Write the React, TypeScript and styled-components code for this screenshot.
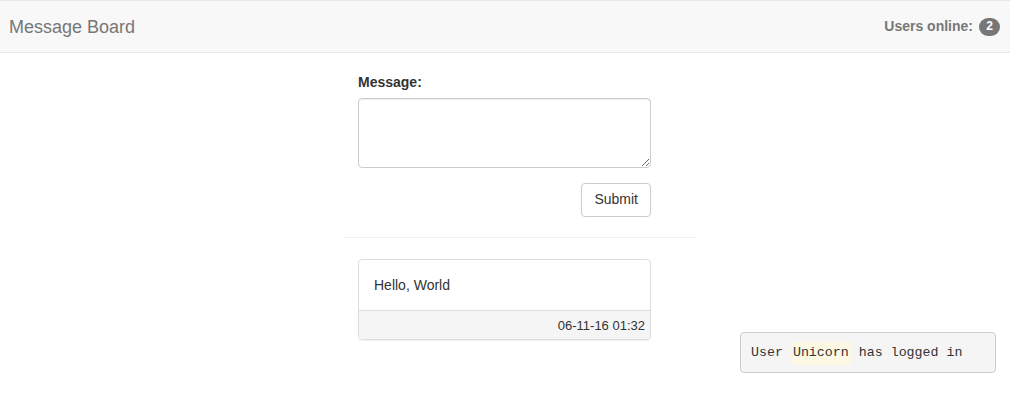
import styled, { createGlobalStyle } from 'styled-components';

const GlobalStyle = createGlobalStyle`
  * { box-sizing: border-box; }
  body {
    margin: 0;
    font-family: "Liberation Sans", Arial, sans-serif;
    font-size: 14px;
    line-height: 1.42857;
    color: #333;
    background: #fff;
  }
`;

const Page = styled.div`
  position: relative;
  width: 1010px;
  height: 402px;
  overflow: hidden;
`;

const Navbar = styled.nav`
  display: flex;
  align-items: center;
  justify-content: space-between;
  height: 53px;
  padding: 0 10px 0 9px;
  background: #f8f8f8;
  border-top: 1px solid #e7e7e7;
  border-bottom: 1px solid #e7e7e7;
`;

const Brand = styled.span`
  font-size: 18px;
  line-height: 20px;
  color: #777;
`;

const NavText = styled.span`
  display: flex;
  align-items: center;
  gap: 6px;
  font-weight: bold;
  color: #777;
  padding-top: 1px;
`;

const Badge = styled.span`
  display: inline-flex;
  align-items: center;
  justify-content: center;
  min-width: 21px;
  height: 18px;
  padding: 0 6px;
  border-radius: 10px;
  background: #777;
  color: #fff;
  font-size: 12px;
  font-weight: bold;
`;

const Column = styled.main`
  width: 352px;
  margin-left: 344px;
  padding-top: 20px;
`;

const Form = styled.form`
  width: 293px;
  margin-left: 14px;
  display: flex;
  flex-direction: column;
`;

const Label = styled.label`
  font-weight: bold;
  margin-bottom: 5px;
`;

const TextArea = styled.textarea`
  height: 70px;
  width: 100%;
  border: 1px solid #ccc;
  border-radius: 4px;
  box-shadow: inset 0 1px 1px rgba(0, 0, 0, 0.075);
  font: inherit;
  padding: 6px 12px;
`;

const Submit = styled.button`
  align-self: flex-end;
  margin-top: 15px;
  height: 34px;
  padding: 0 12px;
  font: inherit;
  color: #333;
  background: #fff;
  border: 1px solid #ccc;
  border-radius: 4px;
`;

const Rule = styled.hr`
  margin: 20px 0 21px;
  border: 0;
  border-top: 1px solid #eee;
`;

const Panel = styled.div`
  width: 293px;
  margin-left: 14px;
  border: 1px solid #ddd;
  border-radius: 4px;
  box-shadow: 0 1px 1px rgba(0, 0, 0, 0.05);
  overflow: hidden;
`;

const PanelBody = styled.div`
  padding: 16px 15px 14px;
`;

const PanelFooter = styled.div`
  padding: 6px 5px 3px 10px;
  text-align: right;
  font-size: 13px;
  background: #f5f5f5;
  border-top: 1px solid #ddd;
`;

const Toast = styled.div`
  position: absolute;
  right: 14px;
  bottom: 29px;
  width: 256px;
  height: 41px;
  padding: 2px 10px 0;
  display: flex;
  align-items: center;
  background: #f5f5f5;
  border: 1px solid #ccc;
  border-radius: 4px;
  font-family: "Liberation Mono", "Courier New", monospace;
  font-size: 13.3px;
  color: #333;
  white-space: pre;
`;

const Mark = styled.mark`
  background: #fcf8e3;
  color: #333;
  padding: 2px 2px;
`;

export default function App() {
  return (
    <Page>
      <GlobalStyle />
      <Navbar>
        <Brand>Message Board</Brand>
        <NavText>
          Users online: <Badge>2</Badge>
        </NavText>
      </Navbar>
      <Column>
        <Form onSubmit={(e) => e.preventDefault()}>
          <Label htmlFor="msg">Message:</Label>
          <TextArea id="msg" />
          <Submit type="submit">Submit</Submit>
        </Form>
        <Rule />
        <Panel>
          <PanelBody>Hello, World</PanelBody>
          <PanelFooter>06-11-16 01:32</PanelFooter>
        </Panel>
      </Column>
      <Toast>
        User <Mark>Unicorn</Mark> has logged in
      </Toast>
    </Page>
  );
}
